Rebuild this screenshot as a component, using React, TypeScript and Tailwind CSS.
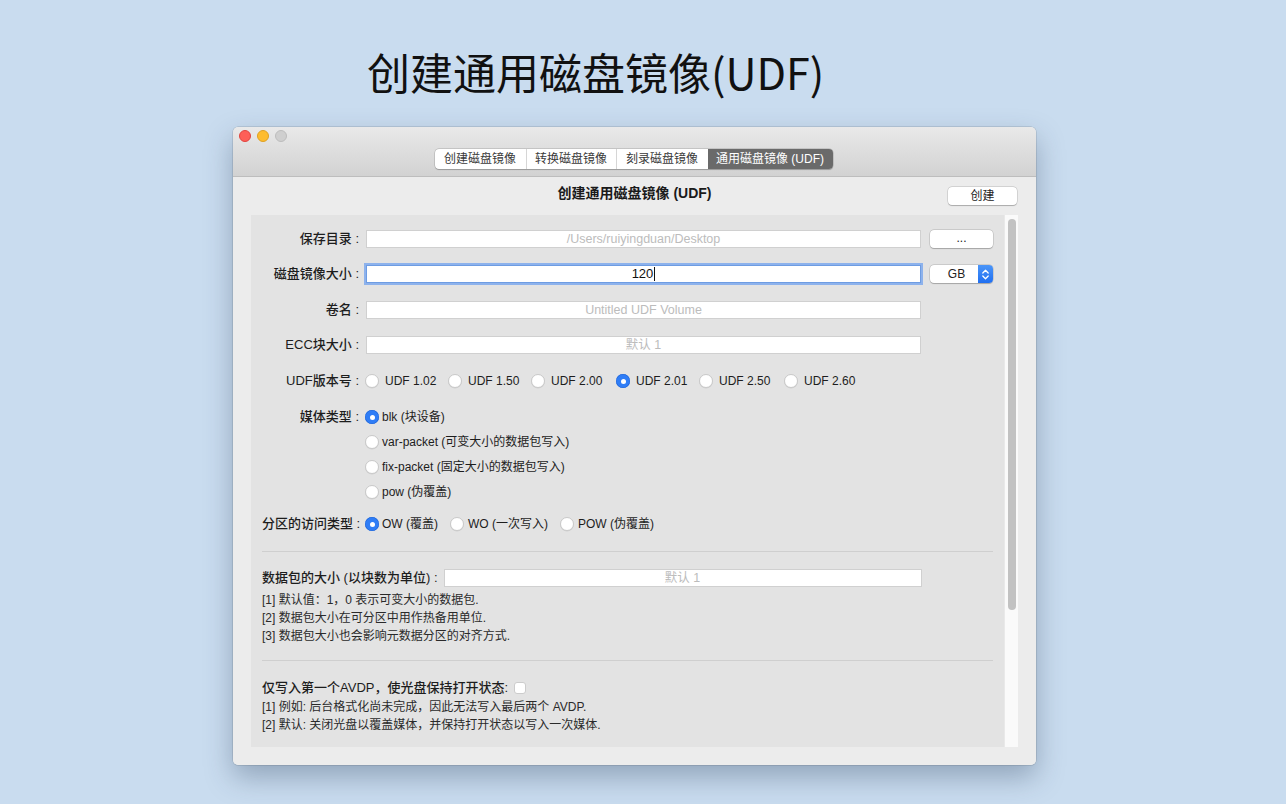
import type { ReactNode } from 'react';

const versions = [
  { label: 'UDF 1.02', w: 'w-[83px]' },
  { label: 'UDF 1.50', w: 'w-[83px]' },
  { label: 'UDF 2.00', w: 'w-[85px]' },
  { label: 'UDF 2.01', w: 'w-[83px]', checked: true },
  { label: 'UDF 2.50', w: 'w-[85px]' },
  { label: 'UDF 2.60', w: 'w-auto' },
];

const mediaTypes = [
  'var-packet (可变大小的数据包写入)',
  'fix-packet (固定大小的数据包写入)',
  'pow (伪覆盖)',
];

const tabs = [
  { label: '创建磁盘镜像', w: 'w-[91px]' },
  { label: '转换磁盘镜像', w: 'w-[90px]' },
  { label: '刻录磁盘镜像', w: 'w-[92px]' },
  { label: '通用磁盘镜像 (UDF)', w: 'w-[125px]', active: true },
];

function Radio({ checked = false }: { checked?: boolean }) {
  if (checked) {
    return (
      <span className="flex size-[14px] shrink-0 items-center justify-center rounded-full bg-[#2f7df6] shadow-[inset_0_0_0_0.5px_#1e63d6]">
        <span className="size-[5px] rounded-full bg-white" />
      </span>
    );
  }
  return (
    <span className="size-[14px] shrink-0 rounded-full border border-[#c9c9c9] bg-white shadow-[0_0.5px_0.5px_rgba(0,0,0,0.08)]" />
  );
}

function Label({ children }: { children: ReactNode }) {
  return (
    <div className="w-[97px] shrink-0 whitespace-nowrap text-right text-[13px] font-medium text-[#1d1d1d]">
      {children}
    </div>
  );
}

function TextField({ placeholder, className = 'w-[555px]' }: { placeholder: string; className?: string }) {
  return (
    <div
      className={`${className} flex h-[18px] shrink-0 items-center justify-center border border-[#d0d0d0] bg-white text-[12.5px] text-[#bcbcbc]`}
    >
      {placeholder}
    </div>
  );
}

export default function App() {
  return (
    <div className="flex h-[804px] w-[1286px] flex-col overflow-hidden bg-[#c9dcef] font-['Liberation_Sans','Noto_Sans_CJK_SC',sans-serif] text-[#1d1d1d]">
      <div className="h-[127px] shrink-0 pl-[367px] pt-[45px] font-['Noto_Sans_CJK_SC',sans-serif] text-[43px] leading-[52px] text-[#111]">
        创建通用磁盘镜像(UDF)
      </div>

      {/* window */}
      <div className="ml-[233px] flex h-[638px] w-[803px] flex-col overflow-hidden rounded-[5px] shadow-[0_0_0_0.5px_rgba(0,0,0,0.18),0_12px_28px_rgba(40,60,90,0.35)]">
        {/* title bar */}
        <div className="flex h-[50px] shrink-0 flex-col border-b border-[#bdbdbd] bg-gradient-to-b from-[#e9e9e9] to-[#d2d2d2]">
          <div className="mt-[3px] flex h-[12px] gap-[6px] pl-[6px]">
            <span className="size-[12px] rounded-full border-[0.5px] border-[#e0443e] bg-[#fe5f57]" />
            <span className="size-[12px] rounded-full border-[0.5px] border-[#dea123] bg-[#febc2e]" />
            <span className="size-[12px] rounded-full border-[0.5px] border-[#bdbdbd] bg-[#cfcfcf]" />
          </div>
          <div className="mt-[7px] flex justify-center pr-[2px]">
            <div className="flex h-[20px] overflow-hidden rounded-[4px] bg-white shadow-[0_0_0_0.5px_rgba(0,0,0,0.2),0_0.5px_1px_rgba(0,0,0,0.2)]">
              {tabs.map((t, i) => (
                <div
                  key={t.label}
                  className={`${t.w} flex items-center justify-center text-[12px] ${
                    t.active ? 'bg-[#6a6a6a] text-white' : 'text-[#3a3a3a]'
                  } ${i > 0 && !t.active ? 'border-l border-[#d6d6d6]' : ''}`}
                >
                  {t.label}
                </div>
              ))}
            </div>
          </div>
        </div>

        {/* content */}
        <div className="flex flex-1 flex-col bg-[#ececec] px-[18px]">
          <div className="grid h-[38px] shrink-0 grid-cols-[1fr_auto_1fr] items-center">
            <div />
            <div className="-mt-[5px] text-[14px] font-semibold text-[#1a1a1a]">创建通用磁盘镜像 (UDF)</div>
            <div className="flex justify-end pr-[1px]">
              <div className="flex h-[18px] w-[69px] items-center justify-center rounded-[4px] bg-white text-[12px] text-[#222] shadow-[0_0_0_0.5px_rgba(0,0,0,0.18),0_0.5px_1px_rgba(0,0,0,0.2)]">
                创建
              </div>
            </div>
          </div>

          {/* scroll view */}
          <div className="flex h-[532px] shrink-0 overflow-hidden bg-[#e3e3e3]">
            <div className="flex flex-1 flex-col px-[11px] pt-[15px]">
              <div className="flex h-[18px] items-center gap-[7px]">
                <Label>保存目录 :</Label>
                <TextField placeholder="/Users/ruiyingduan/Desktop" />
                <div className="ml-[2px] flex h-[18px] w-[63px] items-center justify-center rounded-[4px] bg-white pb-[3px] text-[12px] text-[#222] shadow-[0_0_0_0.5px_rgba(0,0,0,0.18),0_0.5px_1px_rgba(0,0,0,0.2)]">
                  ...
                </div>
              </div>

              <div className="mt-[17px] flex h-[18px] items-center gap-[7px]">
                <Label>磁盘镜像大小 :</Label>
                <div className="flex h-[18px] w-[555px] shrink-0 items-center justify-center border border-[#6e9ce2] bg-white text-[13px] text-[#111] shadow-[0_0_0_2px_#8db2ec]">
                  120
                  <span className="ml-[1px] h-[14px] w-px bg-[#111]" />
                </div>
                <div className="ml-[2px] flex h-[18px] w-[63px] overflow-hidden rounded-[4px] bg-white shadow-[0_0_0_0.5px_rgba(0,0,0,0.18),0_0.5px_1px_rgba(0,0,0,0.2)]">
                  <div className="flex flex-1 items-center justify-center pl-[5px] text-[12px] text-[#222]">GB</div>
                  <div className="flex w-[15px] items-center justify-center bg-gradient-to-b from-[#4b95f8] to-[#1f6ff1]">
                    <svg width="9" height="13" viewBox="0 0 9 13" fill="none" stroke="white" strokeWidth="1.3" strokeLinecap="round" strokeLinejoin="round">
                      <path d="M1.8 5 4.5 2.3 7.2 5" />
                      <path d="M1.8 8 4.5 10.7 7.2 8" />
                    </svg>
                  </div>
                </div>
              </div>

              <div className="mt-[18px] flex h-[18px] items-center gap-[7px]">
                <Label>卷名 :</Label>
                <TextField placeholder="Untitled UDF Volume" />
              </div>

              <div className="mt-[17px] flex h-[18px] items-center gap-[7px]">
                <Label>ECC块大小 :</Label>
                <TextField placeholder="默认 1" />
              </div>

              <div className="mt-[18px] flex h-[18px] items-center gap-[6px]">
                <Label>UDF版本号 :</Label>
                <div className="flex items-center">
                  {versions.map((v) => (
                    <div key={v.label} className={`${v.w} flex items-center gap-[6px] text-[12px]`}>
                      <Radio checked={v.checked} />
                      <span>{v.label}</span>
                    </div>
                  ))}
                </div>
              </div>

              <div className="mt-[18px] flex h-[18px] items-center gap-[6px]">
                <Label>媒体类型 :</Label>
                <div className="flex items-center gap-[3px] text-[12px]">
                  <Radio checked />
                  <span>blk (块设备)</span>
                </div>
              </div>
              {mediaTypes.map((m) => (
                <div key={m} className="ml-[103px] mt-[7px] flex h-[18px] items-center gap-[3px] text-[12px]">
                  <Radio />
                  <span>{m}</span>
                </div>
              ))}

              <div className="mt-[14px] flex h-[18px] items-center gap-[6px]">
                <Label>分区的访问类型 :</Label>
                <div className="flex items-center text-[12px]">
                  <div className="flex w-[85px] items-center gap-[3px]">
                    <Radio checked />
                    <span>OW (覆盖)</span>
                  </div>
                  <div className="flex w-[110px] items-center gap-[4px]">
                    <Radio />
                    <span>WO (一次写入)</span>
                  </div>
                  <div className="flex items-center gap-[4px]">
                    <Radio />
                    <span>POW (伪覆盖)</span>
                  </div>
                </div>
              </div>

              <div className="mt-[18px] h-px bg-[#cfcfcf]" />

              <div className="mt-[17px] flex h-[18px] items-center gap-[6px]">
                <div className="whitespace-nowrap text-[13px] font-medium">数据包的大小 (以块数为单位) :</div>
                <TextField placeholder="默认 1" className="w-[478px]" />
              </div>
              <div className="mt-[4px] text-[12px] leading-[18px] text-[#2a2a2a]">
                <p>[1] 默认值：1，0 表示可变大小的数据包.</p>
                <p>[2] 数据包大小在可分区中用作热备用单位.</p>
                <p>[3] 数据包大小也会影响元数据分区的对齐方式.</p>
              </div>

              <div className="mt-[15px] h-px bg-[#cfcfcf]" />

              <div className="mt-[18px] flex h-[18px] items-center gap-[6px]">
                <div className="whitespace-nowrap text-[13px] font-medium">仅写入第一个AVDP，使光盘保持打开状态:</div>
                <span className="size-[12px] rounded-[3px] border border-[#cccccc] bg-white" />
              </div>
              <div className="mt-[1px] text-[12px] leading-[18px] text-[#2a2a2a]">
                <p>[1] 例如: 后台格式化尚未完成，因此无法写入最后两个 AVDP.</p>
                <p>[2] 默认: 关闭光盘以覆盖媒体，并保持打开状态以写入一次媒体.</p>
              </div>
            </div>

            {/* vertical scroller */}
            <div className="w-[14px] shrink-0 border-l border-[#e9e9e9] bg-[#fafafa] pl-[3px] pt-[4px]">
              <div className="h-[391px] w-[8px] rounded-full bg-[#c2c2c2]" />
            </div>
          </div>
        </div>
      </div>
    </div>
  );
}
